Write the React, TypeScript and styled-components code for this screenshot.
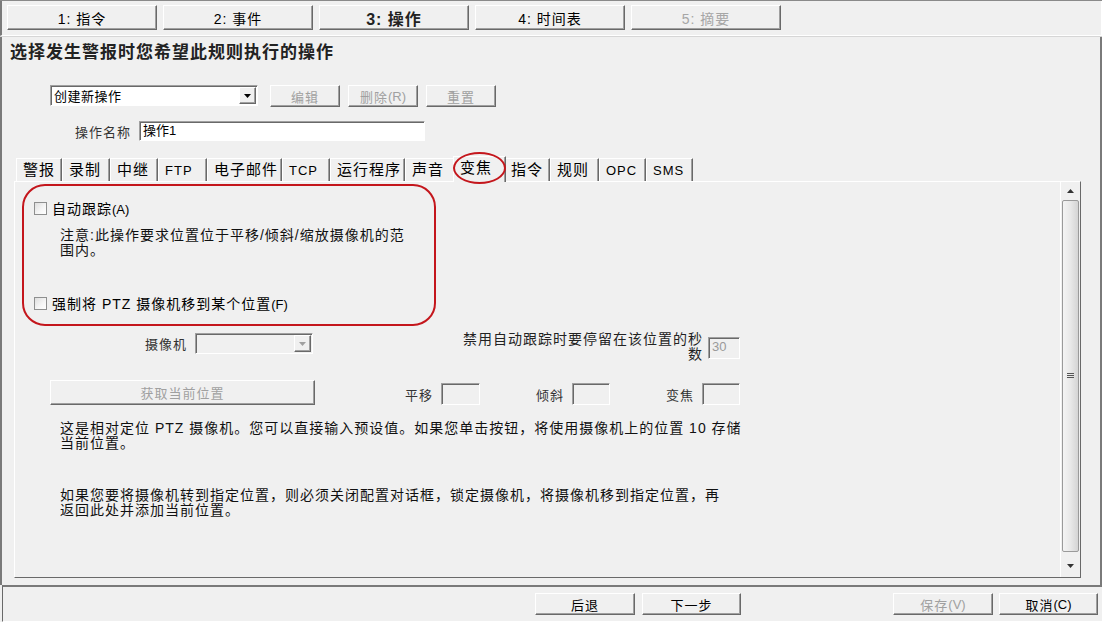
import React from "react";
import styled, { createGlobalStyle, css } from "styled-components";

const FONT = `"Liberation Sans", "Noto Sans CJK SC", sans-serif`;

const GlobalStyle = createGlobalStyle`
  html, body {
    margin: 0;
    padding: 0;
    background: #ffffff;
  }
  body {
    font-family: ${FONT};
    font-size: 14px;
    color: #000;
  }
  * {
    box-sizing: border-box;
  }
`;

const raised = css`
  background: #f0f0f0;
  border: 1px solid;
  border-color: #ffffff #696969 #696969 #ffffff;
  box-shadow: inset -1px -1px 0 #a0a0a0;
`;

const sunken = css`
  border: 1px solid;
  border-color: #a0a0a0 #ffffff #ffffff #a0a0a0;
  box-shadow: inset 1px 1px 0 #696969;
`;

const Window = styled.div`
  width: 1102px;
  height: 622px;
  background: #f0f0f0;
  border-top: 1px solid #8a8a8a;
  display: flex;
  flex-direction: column;
`;

const StepBar = styled.div`
  height: 35px;
  display: flex;
  gap: 6px;
  padding: 4px 0 0 5px;
  border-left: 2px solid #7a7a7a;
  border-right: 1px solid #ffffff;
  border-bottom: 1px solid #ffffff;
  box-shadow: 0 1px 0 #d6d6d6;
`;

const StepButton = styled.div<{ $active?: boolean; $disabled?: boolean }>`
  ${raised};
  width: 150px;
  height: 25px;
  display: flex;
  align-items: center;
  justify-content: center;
  letter-spacing: 1px;
  font-size: ${(p) => (p.$active ? "16px" : "14px")};
  font-weight: ${(p) => (p.$active ? 700 : 400)};
  color: ${(p) => (p.$disabled ? "#a6a6a6" : p.$active ? "#222" : "#000")};
`;

const Content = styled.div`
  flex: 1;
  display: flex;
  flex-direction: column;
  border-left: 2px solid #7a7a7a;
  border-right: 2px solid #7a7a7a;
  margin-top: 1px;
`;

const Title = styled.h1`
  margin: 6px 0 0 8px;
  font-size: 17px;
  line-height: 20px;
  font-weight: 700;
  letter-spacing: 1px;
  color: #222;
`;

const ActionRow = styled.div`
  margin: 22px 0 0 48px;
  display: flex;
  align-items: flex-start;
  gap: 8px;
`;

const Combo = styled.div<{ $width: number; $disabled?: boolean }>`
  ${sunken};
  width: ${(p) => p.$width}px;
  height: 21px;
  background: ${(p) => (p.$disabled ? "#f0f0f0" : "#ffffff")};
  display: flex;
  align-items: center;
  padding: 0 1px 0 3px;
  font-size: 13px;
  letter-spacing: 0.5px;
`;

const ComboText = styled.span`
  flex: 1;
`;

const ComboArrow = styled.div<{ $disabled?: boolean }>`
  ${raised};
  width: 17px;
  height: 17px;
  display: flex;
  align-items: center;
  justify-content: center;
  color: ${(p) => (p.$disabled ? "#a0a0a0" : "#000")};
`;

const Button = styled.div<{ $width: number; $height?: number; $disabled?: boolean }>`
  ${raised};
  width: ${(p) => p.$width}px;
  height: ${(p) => p.$height ?? 22}px;
  display: flex;
  align-items: center;
  justify-content: center;
  font-size: 13px;
  letter-spacing: 1px;
  color: ${(p) => (p.$disabled ? "#a0a0a0" : "#000")};
`;

const NameRow = styled.div`
  margin-top: 14px;
  display: flex;
  align-items: center;
  gap: 8px;
`;

const FieldLabel = styled.div<{ $width?: number }>`
  width: ${(p) => (p.$width ? `${p.$width}px` : "auto")};
  text-align: right;
  font-size: 13px;
  letter-spacing: 1px;
  color: #333;
`;

const TextInput = styled.div<{ $width: number; $disabled?: boolean }>`
  ${sunken};
  width: ${(p) => p.$width}px;
  height: ${(p) => (p.$disabled ? 22 : 20)}px;
  background: ${(p) => (p.$disabled ? "#f0f0f0" : "#ffffff")};
  color: ${(p) => (p.$disabled ? "#9a9a9a" : "#000")};
  padding: 0 3px;
  font-size: 13px;
  line-height: 18px;
`;

const TabArea = styled.div`
  margin: 17px 0 0 12px;
  width: 1067px;
`;

const TabStrip = styled.div`
  height: 23px;
  display: flex;
  align-items: flex-end;
  padding-left: 2px;
  position: relative;
  z-index: 2;
`;

const Tab = styled.div<{ $width: number; $selected?: boolean }>`
  position: relative;
  width: ${(p) => p.$width + (p.$selected ? 4 : 0)}px;
  height: ${(p) => (p.$selected ? 26 : 23)}px;
  margin: ${(p) => (p.$selected ? "0 -2px -1px -2px" : "0")};
  padding: 0 0 0 6px;
  background: #f0f0f0;
  border-top: 1px solid #ffffff;
  border-left: 1px solid #ffffff;
  border-right: 1px solid #696969;
  box-shadow: inset -1px 0 0 #a0a0a0;
  font-size: 15px;
  line-height: 22px;
  letter-spacing: 1px;
  z-index: ${(p) => (p.$selected ? 1 : 0)};
`;

const TabLatin = styled.span`
  font-size: 13px;
`;

const Ellipse = styled.div`
  position: absolute;
  left: -1px;
  top: -5px;
  width: 53px;
  height: 32px;
  border: 2px solid #c4161c;
  border-radius: 50%;
  pointer-events: none;
`;

const Panel = styled.div`
  position: relative;
  height: 397px;
  display: flex;
  border: 1px solid;
  border-color: #ffffff #696969 #696969 #ffffff;
`;

const PanelBody = styled.div`
  flex: 1;
  padding: 18px 0 0 19px;
  display: flex;
  flex-direction: column;
`;

const Highlight = styled.div`
  position: absolute;
  left: 7px;
  top: 2px;
  width: 414px;
  height: 142px;
  border: 2px solid #c4161c;
  border-radius: 23px;
  pointer-events: none;
`;

const CheckRow = styled.div<{ $top: number }>`
  margin-top: ${(p) => p.$top}px;
  height: 16px;
  display: flex;
  align-items: center;
  gap: 5px;
  font-size: 14px;
  letter-spacing: 1px;
`;

const Box = styled.span`
  width: 13px;
  height: 13px;
  border: 1px solid #8e8f8f;
  background: linear-gradient(135deg, #dedede 0%, #f6f6f6 60%, #ffffff 100%);
`;

const Small = styled.span`
  font-size: 13px;
  letter-spacing: 0;
`;

const Note = styled.p<{ $top: number }>`
  margin: ${(p) => p.$top}px 0 0 26px;
  font-size: 14px;
  line-height: 15px;
  letter-spacing: 1px;
  color: #111;
`;

const FormRow = styled.div<{ $top: number; $align: string }>`
  margin-top: ${(p) => p.$top}px;
  width: 706px;
  display: flex;
  align-items: ${(p) => p.$align};
`;

const CameraCell = styled.div`
  margin-top: 1px;
  display: flex;
  align-items: center;
  gap: 8px;
`;

const SecondsLabel = styled.div`
  flex: 1;
  text-align: right;
  margin-right: 5px;
  font-size: 14px;
  line-height: 15px;
  letter-spacing: 1px;
  color: #222;
`;

const SecondsInput = styled(TextInput)`
  margin-top: 5px;
`;

const FieldCell = styled.div`
  width: 130px;
  display: flex;
  align-items: center;
  justify-content: flex-end;
  gap: 8px;
`;

const Spacer = styled.div`
  flex: 1;
`;

const ScrollBar = styled.div`
  width: 20px;
  display: flex;
  flex-direction: column;
  border-left: 1px solid #ffffff;
  background: #f0f0f0;
`;

const ScrollArrow = styled.div`
  height: 18px;
  display: flex;
  align-items: center;
  justify-content: center;
  color: #333;
`;

const ScrollTrack = styled.div`
  flex: 1;
  padding: 0 1px;
`;

const Thumb = styled.div`
  height: 352px;
  border: 1px solid #9a9a9a;
  border-radius: 2px;
  background: linear-gradient(90deg, #f4f4f4 0%, #e8e8e8 50%, #d4d4d4 100%);
  display: flex;
  align-items: center;
  justify-content: center;
`;

const BottomBar = styled.div`
  height: 37px;
  margin-left: 2px;
  border-top: 2px solid #7a7a7a;
  border-left: 1px solid #696969;
  border-bottom: 1px solid #ffffff;
  display: flex;
  align-items: flex-start;
  justify-content: flex-end;
  padding: 6px 4px 0 0;
  gap: 6px;
`;

const NavGroup = styled.div`
  display: flex;
  gap: 7px;
  margin-right: 146px;
`;

const Triangle = ({ up }: { up?: boolean }) => (
  <svg width="7" height="4" viewBox="0 0 7 4">
    <path d={up ? "M0 4h7L3.5 0z" : "M0 0h7L3.5 4z"} fill="currentColor" />
  </svg>
);

const Grip = () => (
  <svg width="7" height="6" viewBox="0 0 7 6">
    <path d="M0 0.5h7M0 2.5h7M0 4.5h7" stroke="#555" strokeWidth="1" />
  </svg>
);

const steps = [
  { label: "1: 指令" },
  { label: "2: 事件" },
  { label: "3: 操作", active: true },
  { label: "4: 时间表" },
  { label: "5: 摘要", disabled: true },
];

const tabs: { label: string; width: number; latin?: boolean }[] = [
  { label: "警报", width: 46 },
  { label: "录制", width: 48 },
  { label: "中继", width: 48 },
  { label: "FTP", width: 49, latin: true },
  { label: "电子邮件", width: 75 },
  { label: "TCP", width: 48, latin: true },
  { label: "运行程序", width: 75 },
  { label: "声音", width: 50 },
  { label: "变焦", width: 49 },
  { label: "指令", width: 46 },
  { label: "规则", width: 49 },
  { label: "OPC", width: 47, latin: true },
  { label: "SMS", width: 47, latin: true },
];

const SELECTED = "变焦";

const App: React.FC = () => {
  return (
    <>
      <GlobalStyle />
      <Window>
        <StepBar>
          {steps.map((s) => (
            <StepButton key={s.label} $active={s.active} $disabled={s.disabled}>
              {s.label}
            </StepButton>
          ))}
        </StepBar>

        <Content>
          <Title>选择发生警报时您希望此规则执行的操作</Title>

          <ActionRow>
            <Combo $width={208} style={{ marginRight: 4 }}>
              <ComboText>创建新操作</ComboText>
              <ComboArrow>
                <Triangle />
              </ComboArrow>
            </Combo>
            <Button $width={70} $disabled>
              编辑
            </Button>
            <Button $width={70} $disabled>
              删除<Small>(R)</Small>
            </Button>
            <Button $width={70} $disabled>
              重置
            </Button>
          </ActionRow>

          <NameRow>
            <FieldLabel $width={129}>操作名称</FieldLabel>
            <TextInput $width={286}>操作1</TextInput>
          </NameRow>

          <TabArea>
            <TabStrip>
              {tabs.map((t) => (
                <Tab key={t.label} $width={t.width} $selected={t.label === SELECTED}>
                  {t.latin ? <TabLatin>{t.label}</TabLatin> : t.label}
                  {t.label === SELECTED && <Ellipse />}
                </Tab>
              ))}
            </TabStrip>

            <Panel>
              <PanelBody>
                <CheckRow $top={0}>
                  <Box />
                  <span>
                    自动跟踪<Small>(A)</Small>
                  </span>
                </CheckRow>
                <Note $top={12}>
                  注意:此操作要求位置位于平移/倾斜/缩放摄像机的范
                  <br />
                  围内。
                </Note>
                <CheckRow $top={37}>
                  <Box />
                  <span>
                    强制将 PTZ 摄像机移到某个位置<Small>(F)</Small>
                  </span>
                </CheckRow>

                <FormRow $top={21} $align="flex-start">
                  <CameraCell>
                    <FieldLabel $width={153}>摄像机</FieldLabel>
                    <Combo $width={118} $disabled>
                      <ComboText />
                      <ComboArrow $disabled>
                        <Triangle />
                      </ComboArrow>
                    </Combo>
                  </CameraCell>
                  <SecondsLabel>
                    禁用自动跟踪时要停留在该位置的秒
                    <br />
                    数
                  </SecondsLabel>
                  <SecondsInput $width={32} $disabled>
                    30
                  </SecondsInput>
                </FormRow>

                <FormRow $top={18} $align="flex-end">
                  <Button $width={265} $height={25} $disabled style={{ marginLeft: 16 }}>
                    获取当前位置
                  </Button>
                  <Spacer />
                  <FieldCell>
                    <FieldLabel>平移</FieldLabel>
                    <TextInput $width={39} $disabled />
                  </FieldCell>
                  <FieldCell>
                    <FieldLabel>倾斜</FieldLabel>
                    <TextInput $width={38} $disabled />
                  </FieldCell>
                  <FieldCell>
                    <FieldLabel>变焦</FieldLabel>
                    <TextInput $width={38} $disabled />
                  </FieldCell>
                </FormRow>

                <Note $top={16}>
                  这是相对定位 PTZ 摄像机。您可以直接输入预设值。如果您单击按钮，将使用摄像机上的位置 10 存储
                  <br />
                  当前位置。
                </Note>
                <Note $top={37}>
                  如果您要将摄像机转到指定位置，则必须关闭配置对话框，锁定摄像机，将摄像机移到指定位置，再
                  <br />
                  返回此处并添加当前位置。
                </Note>
              </PanelBody>

              <ScrollBar>
                <ScrollArrow>
                  <Triangle up />
                </ScrollArrow>
                <ScrollTrack>
                  <Thumb>
                    <Grip />
                  </Thumb>
                </ScrollTrack>
                <ScrollArrow style={{ height: 22 }}>
                  <Triangle />
                </ScrollArrow>
              </ScrollBar>

              <Highlight />
            </Panel>
          </TabArea>
        </Content>

        <BottomBar>
          <NavGroup>
            <Button $width={100}>后退</Button>
            <Button $width={99}>下一步</Button>
          </NavGroup>
          <Button $width={100} $disabled>
            保存<Small>(V)</Small>
          </Button>
          <Button $width={99}>
            取消<Small>(C)</Small>
          </Button>
        </BottomBar>
      </Window>
    </>
  );
};

export default App;
